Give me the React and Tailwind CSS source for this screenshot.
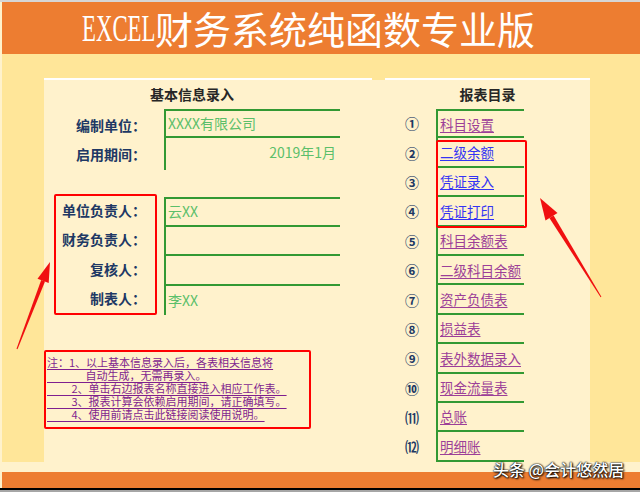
import React from "react";

const reports = [
  { no: "①", name: "科目设置", blue: false },
  { no: "②", name: "二级余额", blue: true },
  { no: "③", name: "凭证录入", blue: true },
  { no: "④", name: "凭证打印", blue: true },
  { no: "⑤", name: "科目余额表", blue: false },
  { no: "⑥", name: "二级科目余额", blue: false },
  { no: "⑦", name: "资产负债表", blue: false },
  { no: "⑧", name: "损益表", blue: false },
  { no: "⑨", name: "表外数据录入", blue: false },
  { no: "⑩", name: "现金流量表", blue: false },
  { no: "⑾", name: "总账", blue: false },
  { no: "⑿", name: "明细账", blue: false },
];

const people = [
  { label: "单位负责人：", value: "云XX" },
  { label: "财务负责人：", value: "" },
  { label: "复核人：", value: "" },
  { label: "制表人：", value: "李XX" },
];

const notes = [
  "注：1、以上基本信息录入后，各表相关信息将",
  "\u3000\u3000\u3000\u2002自动生成，无需再录入。",
  "\u3000\u3000 2、单击右边报表名称直接进入相应工作表。",
  "\u3000\u3000 3、报表计算会依赖启用期间，请正确填写。",
  "\u3000\u3000 4、使用前请点击此链接阅读使用说明。",
];

function Arrows() {
  return (
    <svg className="absolute left-0 top-0 pointer-events-none" width="640" height="492" viewBox="0 0 640 492">
      {/* left arrow */}
      <polygon points="50,262 48.7,282.9 37.5,278.7" fill="#f01010" />
      <polygon points="45,281.5 41.2,280.1 16.5,348.8 17.5,349.2" fill="#f01010" />
      {/* right arrow */}
      <polygon points="540,198 557.5,213 545.5,220.4" fill="#f01010" />
      <polygon points="553.6,215.4 549.4,218 600.6,297.2 601.4,296.8" fill="#f01010" />
    </svg>
  );
}

export default function App() {
  return (
    <div
      className="relative w-[640px] h-[492px] flex flex-col overflow-hidden bg-[#a6a6a6]"
      style={{ fontFamily: '"Noto Sans CJK SC", "Noto Sans", sans-serif' }}
    >
      <div className="h-[2px] bg-[#d6d6d6]" />
      <div className="flex flex-1">
        <div className="w-[2px] bg-[#fff2cc]" />
        <div className="flex flex-1 flex-col">
          {/* header */}
          <header className="h-[52px] bg-[#ed7d31] flex items-center pl-[80px] text-white">
            <span className="inline-block w-[73px] overflow-visible">
              <span
                className="inline-block origin-left scale-x-60 text-[38px] leading-none"
                style={{ fontFamily: '"Liberation Serif", serif' }}
              >
                EXCEL
              </span>
            </span>
            <span className="text-[38px] leading-none font-normal">财务系统纯函数专业版</span>
          </header>

          {/* body */}
          <div className="h-[408px] bg-[#ffe699] pl-[42px] pt-[24px]">
            <div className="w-[546px] h-[384px] bg-[#fff2cc] flex">
              {/* left panel */}
              <section className="w-[328px] border-t-2 border-white">
                <div className="w-[296px] h-[29px] flex items-center justify-center text-[14px] font-bold text-[#262626]">
                  基本信息录入
                </div>

                <div className="flex">
                  <div className="ml-[10px] w-[103px] border-2 border-transparent">
                    {["编制单位：", "启用期间："].map((l) => (
                      <div key={l} className="h-[29px] flex items-center justify-end pr-[9px] text-[14px] font-bold text-[#203864]">
                        {l}
                      </div>
                    ))}
                  </div>
                  <div className="ml-[7px] w-[176px] border-l-2 border-[#339933] h-[61px]">
                    <div className="h-[29px] border-y-2 border-[#339933] flex items-center pl-[2px] text-[14px] text-[#5bbf6a]">
                      XXXX有限公司
                    </div>
                    <div className="h-[29px] flex items-center justify-end pr-[4px] text-[14px] text-[#5bbf6a]">
                      2019年1月
                    </div>
                  </div>
                </div>

                <div className="flex mt-[23px]">
                  <div className="ml-[10px] w-[103px] h-[121px] border-2 border-[#ff0000] rounded-[2px]">
                    {people.map((p) => (
                      <div key={p.label} className="h-[29.25px] flex items-center justify-end pr-[9px] text-[14px] font-bold text-[#203864]">
                        {p.label}
                      </div>
                    ))}
                  </div>
                  <div className="ml-[7px] mt-[3px] w-[176px] border-l-2 border-[#339933] h-[118px]">
                    {people.map((p, i) => (
                      <div
                        key={p.label}
                        className={`h-[29.5px] flex items-center pl-[2px] text-[14px] text-[#5bbf6a] ${i === 0 ? "border-t-2 " : ""}${i < 3 ? "border-b-2 " : ""}border-[#339933]`}
                      >
                        {p.value}
                      </div>
                    ))}
                  </div>
                </div>

                <div className="mt-[35px] w-[267px] h-[79px] border-2 border-[#ff0000] rounded-[2px] pt-[4px] pl-[1px]">
                  {notes.map((n, i) => (
                    <div
                      key={i}
                      className="h-[13px] whitespace-pre text-[11px] leading-[13px] text-[#7f1f8f] underline decoration-1 underline-offset-2"
                    >
                      {n}
                    </div>
                  ))}
                </div>
              </section>

              <div className="w-[13px] border-t-2 border-[#ffe699]" />

              {/* right panel */}
              <section className="relative w-[205px] border-t-2 border-white">
                <div className="h-[29px] flex items-center justify-center text-[14px] font-bold text-[#262626]">
                  报表目录
                </div>
                <div>
                  {reports.map((r, i) => (
                    <div key={r.no} className="flex h-[29.4px]">
                      <div className="w-[51px] pl-[3px] flex items-center justify-center text-[14px] font-bold text-[#203864]">
                        {r.no}
                      </div>
                      <div
                        className={`w-[88px] border-l-2 border-b-2 border-[#339933] ${i === 0 ? "border-t-2" : ""} flex items-center pl-[2px]`}
                      >
                        <span
                          className={`text-[13.5px] underline decoration-1 underline-offset-2 ${r.blue ? "text-[#3434f4]" : "text-[#9c3f98]"}`}
                        >
                          {r.name}
                        </span>
                      </div>
                    </div>
                  ))}
                </div>
                <div className="absolute left-[51px] top-[60px] w-[91px] h-[88px] border-2 border-[#ff0000] rounded-[2px]" />
              </section>
            </div>
          </div>

          <div className="h-[10px] bg-[#fff2cc]" />
          <div className="h-[16px] bg-[#ed7d31]" />
        </div>
      </div>
      <div className="h-[2px] bg-black" />
      <div className="h-[2px] bg-[#a6a6a6]" />

      <Arrows />

      <div className="absolute left-[493px] top-[457px] text-[16px] leading-[24px] font-medium text-white [text-shadow:0_0_1px_#000,0_0_2px_#000,1px_1px_2px_#000]">
        头条 @会计悠然居
      </div>
    </div>
  );
}
